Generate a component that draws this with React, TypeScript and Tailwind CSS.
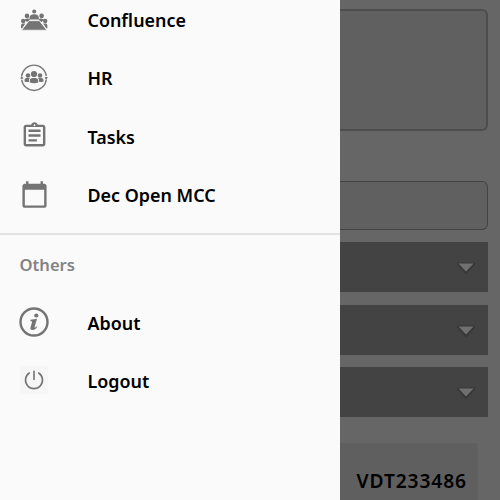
import type { ReactNode } from 'react'

function ConfluenceIcon() {
  return (
    <svg viewBox="0 0 30 30" className="size-[30px]" fill="#747474">
      <circle cx="15.2" cy="6.4" r="2" />
      <path d="M10.6 14.6v-1.9c0-2.2 1.5-3.5 4.6-3.5s4.6 1.3 4.6 3.5v1.9z" />
      <circle cx="8" cy="10.9" r="2.3" />
      <circle cx="22.6" cy="10.9" r="2.3" />
      <path d="M5.8 15.6v-1.4l3-.7 2 .5v1l-2.6 2z" />
      <path d="M24.7 15.6v-1.4l-3-.7-2 .5v1l2.6 2z" />
      <circle cx="4.2" cy="16" r="2.2" />
      <circle cx="26.2" cy="16" r="2.2" />
      <path d="M2 23.3v-2.6c0-1.5.9-2.1 2.4-2.1h1.9l-3.1 4.7z" />
      <path d="M28.4 23.3v-2.6c0-1.5-.9-2.1-2.4-2.1h-1.9l3.1 4.7z" />
      <path d="M10 15.7h10.4l7.4 9.5H2.6z" stroke="#fafafa" strokeWidth=".7" />
    </svg>
  )
}

function HrIcon() {
  return (
    <svg viewBox="0 0 30 30" className="size-[30px]" fill="#747474">
      <path
        d="M2.7 13a12.4 12.4 0 0 1 24.6 0M27.3 16.6a12.4 12.4 0 0 1-24.6 0"
        fill="none"
        stroke="#7a7a7a"
        strokeWidth="1.4"
      />
      <path d="M1.2 15.8 2.8 12.8l1.7 3zM25.5 13.9h3.4l-1.7 3z" />
      <circle cx="15" cy="11" r="3.1" />
      <circle cx="9" cy="12.5" r="2.3" />
      <circle cx="21" cy="12.5" r="2.3" />
      <path d="M10.8 19.6v-1.9c0-1.8 1.2-2.7 3-2.7h2.4c1.8 0 3 .9 3 2.7v1.9q-4.2 1.5-8.4 0z" />
      <path d="M5.5 18.4v-1.3c0-1.3.9-2 2.2-2h3.2c-.7.7-1 1.6-1 2.7v1.1q-2.3.2-4.4-.5z" />
      <path d="M24.5 18.4v-1.3c0-1.3-.9-2-2.2-2h-3.2c.7.7 1 1.6 1 2.7v1.1q2.3.2 4.4-.5z" />
    </svg>
  )
}

function TasksIcon() {
  return (
    <svg viewBox="0 0 24 24" className="mb-px size-[29px]" fill="#747474">
      <path d="M7 15h7v2H7zm0-4h10v2H7zm0-4h10v2H7zm12-4h-4.18C14.4 1.84 13.3 1 12 1s-2.4.84-2.82 2H5c-1.1 0-2 .9-2 2v14c0 1.1.9 2 2 2h14c1.1 0 2-.9 2-2V5c0-1.1-.9-2-2-2zm-7-.25c.41 0 .75.34.75.75s-.34.75-.75.75-.75-.34-.75-.75.34-.75.75-.75zM19 19H5V5h14v14z" />
    </svg>
  )
}

function CalendarIcon() {
  return (
    <svg viewBox="0 0 24 24" className="size-[29px]" fill="#747474">
      <path d="M20 3h-1V1h-2v2H7V1H5v2H4c-1.1 0-2 .9-2 2v16c0 1.1.9 2 2 2h16c1.1 0 2-.9 2-2V5c0-1.1-.9-2-2-2zm0 18H4V8h16v13z" />
    </svg>
  )
}

function AboutIcon() {
  return (
    <svg viewBox="0 0 30 30" className="size-[30px]" fill="#747474">
      <circle cx="15" cy="15" r="13.5" fill="none" stroke="#747474" strokeWidth="2.4" />
      <circle cx="17.3" cy="8.5" r="2.1" />
      <path d="M11.5 12.7q3.8-.2 6.5-.9l-2.4 8.2c-.2.8.3.8.8.4l1.3-1.2.6.5c-1.5 2.2-2.9 3.2-4.8 3.2-1.7 0-2.5-.9-2-2.5l1.5-5.1c.2-.9-.1-1.3-1.6-1.4z" />
    </svg>
  )
}

function LogoutIcon() {
  return (
    <div className="mb-0.5 flex size-7 items-center justify-center bg-[#f6f6f6]">
      <svg viewBox="0 0 24 24" className="size-6" fill="none" stroke="#747474" strokeWidth="1.6" strokeLinecap="round">
        <path d="M12 3.2v8.3M7.3 5a8.5 8.5 0 1 0 9.4 0" />
      </svg>
    </div>
  )
}

function MenuItem({ icon, label }: { icon: ReactNode; label: string }) {
  return (
    <a className="flex h-[58.4px] items-center">
      <span className="flex w-17 shrink-0 items-center justify-center">{icon}</span>
      <span className="pt-[1.5px] pl-[19.5px] text-[17.9px] font-semibold text-black">{label}</span>
    </a>
  )
}

function SelectBar() {
  return (
    <div className="flex h-[50px] w-[148px] shrink-0 items-center justify-end bg-[#434343] pr-3">
      <svg viewBox="0 0 20 16" className="mt-0.5 h-4 w-5">
        <path d="M1 2.5h18v2L10 14.5l-9-10z" fill="#383838" />
        <path d="M2.5 3.5h15l-7.5 8z" fill="#707070" />
      </svg>
    </div>
  )
}

export default function App() {
  return (
    <div className="flex h-[500px] w-[500px] overflow-hidden bg-[#666666] font-['Noto_Sans','Open_Sans',sans-serif]">
      <nav className="h-full w-[340px] shrink-0 overflow-hidden bg-[#fafafa]">
        <div className="-mt-[9.5px]">
          <MenuItem icon={<ConfluenceIcon />} label="Confluence" />
          <MenuItem icon={<HrIcon />} label="HR" />
          <MenuItem icon={<TasksIcon />} label="Tasks" />
          <MenuItem icon={<CalendarIcon />} label="Dec Open MCC" />
        </div>
        <div className="mt-[9px] h-0.5 bg-[#e2e2e2]" />
        <h2 className="flex h-[58px] items-center pt-0.5 pl-[19.5px] text-[16.6px] font-semibold text-[#838383]">
          Others
        </h2>
        <MenuItem icon={<AboutIcon />} label="About" />
        <MenuItem icon={<LogoutIcon />} label="Logout" />
      </nav>
      <main className="flex h-full w-40 flex-col overflow-hidden pt-[9px]">
        <div className="h-[122px] w-[148px] shrink-0 rounded-r-md border-y-2 border-r-2 border-[#4d4d4d] bg-[#606060]" />
        <div className="mt-[50px] h-[49px] w-[148px] shrink-0 rounded-r-md border-y-[1.5px] border-r-[1.5px] border-[#444444] bg-[#606060]" />
        <div className="mt-3 flex flex-col gap-[12.5px]">
          <SelectBar />
          <SelectBar />
          <SelectBar />
        </div>
        <div className="mt-[26px] h-20 w-[138px] shrink-0 rounded-tr bg-[#5f5f5f] pt-6 pl-[16.5px] text-[19.2px] leading-7 font-semibold tracking-[0.9px] text-black">
          VDT233486
        </div>
      </main>
    </div>
  )
}
